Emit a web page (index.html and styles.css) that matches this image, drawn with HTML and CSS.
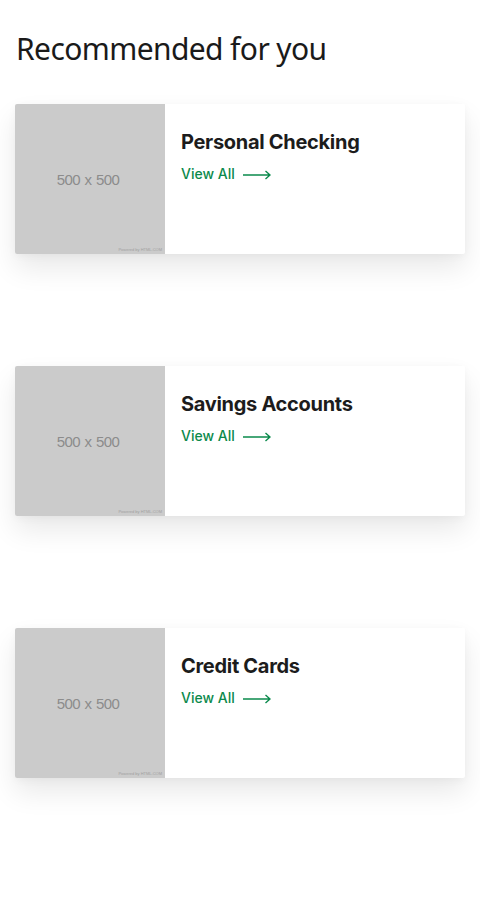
FILE: index.html
```html
<!DOCTYPE html>
<html lang="en">
<head>
<meta charset="utf-8">
<title>Recommended for you</title>
<link rel="stylesheet" href="styles.css">
</head>
<body>
<main class="page">
  <h1 class="heading">Recommended for you</h1>
  <ul class="cards">
    <li class="card">
      <div class="thumb"><span class="thumb-label">500 x 500</span><span class="thumb-credit">Powered by HTML.COM</span></div>
      <div class="card-body">
        <h2 class="card-title">Personal Checking</h2>
        <a class="view-all" href="#">View All
          <svg class="arrow" width="28" height="10" viewBox="0 0 28 10"><path d="M0 5H27M22.5 1L27 5L22.5 9" fill="none" stroke="currentColor" stroke-width="1.4"/></svg>
        </a>
      </div>
    </li>
    <li class="card">
      <div class="thumb"><span class="thumb-label">500 x 500</span><span class="thumb-credit">Powered by HTML.COM</span></div>
      <div class="card-body">
        <h2 class="card-title">Savings Accounts</h2>
        <a class="view-all" href="#">View All
          <svg class="arrow" width="28" height="10" viewBox="0 0 28 10"><path d="M0 5H27M22.5 1L27 5L22.5 9" fill="none" stroke="currentColor" stroke-width="1.4"/></svg>
        </a>
      </div>
    </li>
    <li class="card">
      <div class="thumb"><span class="thumb-label">500 x 500</span><span class="thumb-credit">Powered by HTML.COM</span></div>
      <div class="card-body">
        <h2 class="card-title">Credit Cards</h2>
        <a class="view-all" href="#">View All
          <svg class="arrow" width="28" height="10" viewBox="0 0 28 10"><path d="M0 5H27M22.5 1L27 5L22.5 9" fill="none" stroke="currentColor" stroke-width="1.4"/></svg>
        </a>
      </div>
    </li>
  </ul>
</main>
</body>
</html>
```
FILE: styles.css
```css
* { box-sizing: border-box; }
html, body { margin: 0; padding: 0; background: #fff; }
body { font-family: "Open Sans", "Noto Sans", sans-serif; color: #1c1c1c; }
.page { padding: 28px 15px 120px 15px; }
.heading {
  margin: 0 0 0 1px;
  font-family: "Noto Sans", "Open Sans", sans-serif;
  font-weight: 400;
  font-size: 30px;
  line-height: 42px;
  letter-spacing: -0.6px;
  color: #1a1a1a;
}
.cards {
  list-style: none;
  margin: 34px 0 0 0;
  padding: 0;
  display: flex;
  flex-direction: column;
  gap: 112px;
}
.card {
  display: flex;
  width: 450px;
  height: 150px;
  background: #fff;
  border-radius: 2px;
  overflow: hidden;
  box-shadow: 0 14px 28px rgba(0,0,0,0.09), 0 2px 8px rgba(0,0,0,0.04);
}
.thumb {
  position: relative;
  flex: 0 0 150px;
  height: 150px;
  background: #cbcbcb;
  display: flex;
  align-items: center;
  justify-content: center;
}
.thumb-label {
  font-family: "Liberation Sans", Arial, sans-serif;
  font-size: 15px;
  letter-spacing: -0.6px;
  word-spacing: 1px;
  color: #8c8c8c;
  margin-left: -4px;
  margin-top: 0;
}
.thumb-credit {
  position: absolute;
  right: 3px;
  bottom: 2px;
  font-family: "Liberation Sans", Arial, sans-serif;
  font-size: 4px;
  color: #a0a0a0;
}
.card-body {
  padding: 25px 16px 0 16px;
}
.card-title {
  margin: 0;
  font-family: "Inter", "Roboto", sans-serif;
  font-weight: 700;
  font-size: 20px;
  line-height: 26px;
  letter-spacing: -0.3px;
  color: #1c1c1c;
}
.view-all {
  display: inline-flex;
  align-items: center;
  gap: 8px;
  margin-top: 10px;
  font-family: "Inter", "Roboto", sans-serif;
  font-size: 14px;
  font-weight: 500;
  line-height: 18px;
  color: #0b8a4c;
  text-decoration: none;
}
.arrow { display: block; margin-top: 1px; }
```
